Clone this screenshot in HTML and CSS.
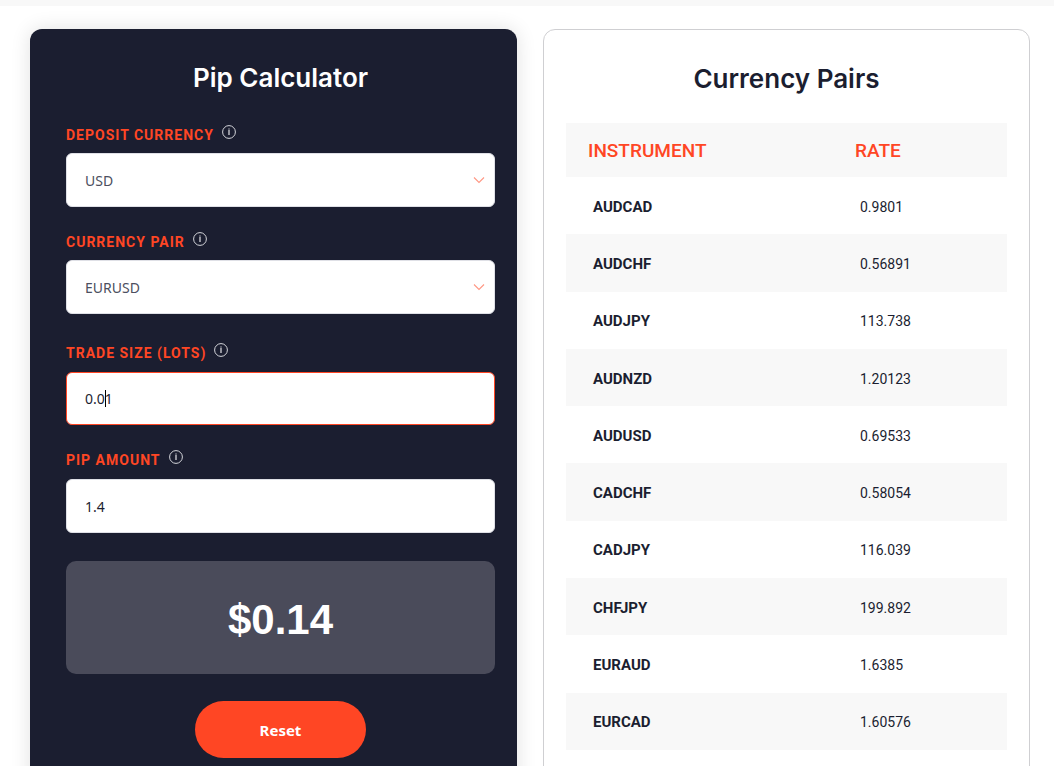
FILE: index.html
```
<!DOCTYPE html>
<html lang="en">
<head>
    <meta charset="UTF-8">
    <meta name="viewport" content="width=device-width, initial-scale=1.0">
    <title>Pip Calculator</title>
    <link rel="stylesheet" href="styles.css">
</head>
<body>

<svg class="sprite" width="0" height="0" aria-hidden="true">
    <symbol id="info" viewBox="0 0 14 14">
        <circle cx="7" cy="7" r="6.4" fill="none" stroke="currentColor" stroke-width="1"/>
        <path d="M7 5v5M7 3.6v1" fill="none" stroke="currentColor" stroke-width="1.3"/>
    </symbol>
    <symbol id="chevron" viewBox="0 0 12 8">
        <path d="M1 1.5l5 5 5-5" fill="none" stroke="currentColor" stroke-width="1.1"/>
    </symbol>
</svg>

<main class="wrapper">
    <form class="card calculator">
        <h2 class="title">Pip Calculator</h2>

        <div class="field">
            <div class="label-row">
                <label for="deposit">Deposit Currency</label>
                <svg class="info-icon"><use href="#info"/></svg>
            </div>
            <div class="control">
                <select id="deposit">
                    <option>USD</option>
                    <option>EUR</option>
                    <option>GBP</option>
                </select>
                <svg class="chevron"><use href="#chevron"/></svg>
            </div>
        </div>

        <div class="field">
            <div class="label-row">
                <label for="pair">Currency Pair</label>
                <svg class="info-icon"><use href="#info"/></svg>
            </div>
            <div class="control">
                <select id="pair">
                    <option>EURUSD</option>
                    <option>AUDCAD</option>
                    <option>AUDCHF</option>
                </select>
                <svg class="chevron"><use href="#chevron"/></svg>
            </div>
        </div>

        <div class="inputs">
            <div class="field">
                <div class="label-row">
                    <label for="size">Trade Size (Lots)</label>
                    <svg class="info-icon"><use href="#info"/></svg>
                </div>
                <div class="control">
                    <input type="text" id="size" class="active" value="0.01">
                    <span class="caret"></span>
                </div>
            </div>

            <div class="field">
                <div class="label-row">
                    <label for="pips">Pip Amount</label>
                    <svg class="info-icon"><use href="#info"/></svg>
                </div>
                <div class="control">
                    <input type="text" id="pips" value="1.4">
                </div>
            </div>
        </div>

        <output class="result" for="size pips">$0.14</output>
        <button type="reset" class="reset-btn">Reset</button>
    </form>

    <section class="card pairs">
        <h2 class="title">Currency Pairs</h2>
        <table>
            <thead>
                <tr><th>Instrument</th><th>Rate</th></tr>
            </thead>
            <tbody>
                <tr><td>AUDCAD</td><td>0.9801</td></tr>
                <tr><td>AUDCHF</td><td>0.56891</td></tr>
                <tr><td>AUDJPY</td><td>113.738</td></tr>
                <tr><td>AUDNZD</td><td>1.20123</td></tr>
                <tr><td>AUDUSD</td><td>0.69533</td></tr>
                <tr><td>CADCHF</td><td>0.58054</td></tr>
                <tr><td>CADJPY</td><td>116.039</td></tr>
                <tr><td>CHFJPY</td><td>199.892</td></tr>
                <tr><td>EURAUD</td><td>1.6385</td></tr>
                <tr><td>EURCAD</td><td>1.60576</td></tr>
            </tbody>
        </table>
    </section>
</main>

</body>
</html>
```
FILE: styles.css
```
* {
    box-sizing: border-box;
}
html {
    height: 100%;
    overflow: hidden;
}
body {
    margin: 0;
    height: 100%;
    overflow: auto;
    scrollbar-width: none;
    border-top: 6px solid #f8f8f8;
    background-color: #fff;
    color: #1b1e30;
    font-family: Roboto, "Liberation Sans", sans-serif;
}
.sprite {
    position: absolute;
}
.wrapper {
    display: grid;
    grid-template-columns: 1fr 1fr;
    gap: 26px;
    padding: 23px 24px 40px 30px;
}
.card {
    border-radius: 12px;
}
.title {
    margin: 0;
    font-size: 26px;
    line-height: 32px;
    font-weight: 600;
    font-family: Inter, sans-serif;
    text-align: center;
}

/* calculator */
.calculator {
    display: flex;
    flex-direction: column;
    padding: 33px 22px 40px 36px;
    background-color: #1b1e30;
    box-shadow: 0 0 20px rgba(0, 0, 0, 0.12);
}
.calculator .title {
    margin-bottom: 30px;
    color: #fff;
}
.field {
    margin-bottom: 24px;
}
.label-row {
    display: flex;
    align-items: flex-start;
    gap: 8px;
    height: 29px;
}
.label-row label {
    color: #ff4624;
    font-size: 14px;
    line-height: 22px;
    font-weight: 700;
    letter-spacing: 1px;
    text-transform: uppercase;
}
.info-icon {
    width: 14px;
    height: 14px;
    margin-top: 1px;
    color: #d4d5da;
}
.control {
    position: relative;
}
select, input {
    display: block;
    width: 100%;
    height: 54px;
    padding: 0 18px;
    border: 1px solid #dfe0e6;
    border-radius: 6px;
    outline: none;
    appearance: none;
    background-color: #fff;
    color: #1b1e30;
    font-family: "Noto Sans", sans-serif;
    font-size: 14px;
}
select {
    color: #4c4f60;
}
.inputs {
    padding: 4px 0;
}
.inputs .label-row {
    height: 30px;
}
input.active {
    height: 53px;
    border-color: #ff4624;
}
.chevron {
    position: absolute;
    top: 23px;
    right: 10px;
    width: 12px;
    height: 8px;
    color: #ff9783;
    pointer-events: none;
}
.caret {
    position: absolute;
    top: 18px;
    left: 39px;
    width: 1px;
    height: 17px;
    background-color: #000;
}
.result {
    display: block;
    padding: 35px 0 30px;
    border-radius: 10px;
    background-color: #4a4b5a;
    color: #fff;
    font-family: "Liberation Sans", sans-serif;
    font-size: 42px;
    line-height: 48px;
    font-weight: 700;
    text-align: center;
}
.inputs .field:last-child {
    margin-bottom: 24px;
}
.reset-btn {
    align-self: center;
    margin-top: 27px;
    padding: 0 65px;
    height: 57px;
    border: none;
    border-radius: 29px;
    background-color: #ff4624;
    color: #fff;
    font-family: "Noto Sans", sans-serif;
    font-size: 15px;
    font-weight: 700;
    cursor: pointer;
}

/* rates table */
.pairs {
    padding: 33px 22px 40px;
    border: 1px solid #cfcfd2;
}
.pairs .title {
    margin-bottom: 28px;
}
table {
    width: 100%;
    height: 627px;
    border-collapse: collapse;
    table-layout: fixed;
}
th, td {
    padding: 2px 0 0 27px;
    text-align: left;
    font-size: 14px;
}
th {
    height: 54px;
    padding: 0 0 0 22px;
    color: #ff4624;
    font-size: 19px;
    font-weight: 500;
    text-transform: uppercase;
}
th:first-child {
    width: 61%;
}
th:last-child {
    padding-left: 20px;
}
td:last-child {
    padding-left: 25px;
}
td:first-child {
    font-size: 15px;
    font-weight: 700;
}
thead tr, tbody tr:nth-child(even) {
    background-color: #f8f8f8;
}
```
